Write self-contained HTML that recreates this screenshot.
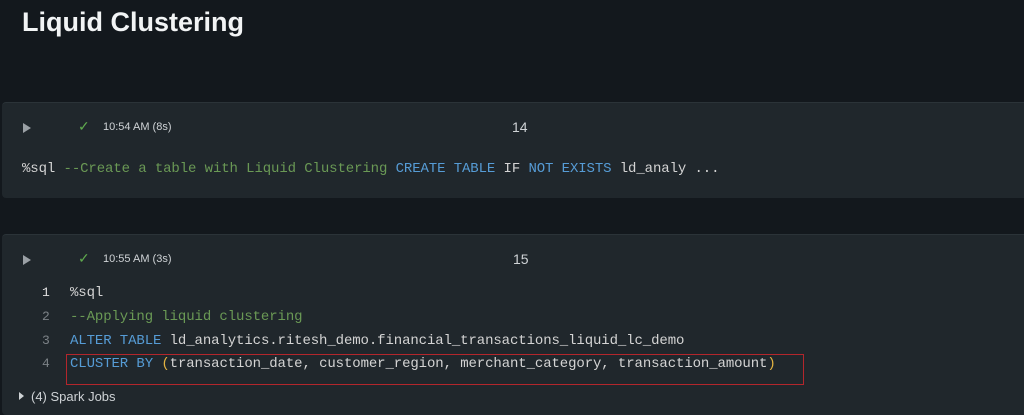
<!DOCTYPE html>
<html><head><style>
body{margin:0;width:1024px;height:405px;background:#13181d;overflow:hidden;position:relative;font-family:"Liberation Sans",sans-serif;}
.t{position:absolute;left:22px;top:7px;font-size:27px;font-weight:bold;color:#f2f4f5;}
.cell{position:absolute;left:2px;right:0;background:#20272c;border-top:1px solid #2b3338;border-radius:4px 0 0 4px;}
.m{font-family:"Liberation Mono",monospace;font-size:14px;letter-spacing:-0.1px;position:absolute;white-space:pre;color:#d4d4d4;}
.s{position:absolute;font-size:11px;color:#cfd3d6;}
.ck{position:absolute;color:#5faa4e;font-size:14px;}
.pl{position:absolute;width:0;height:0;border-left:8px solid #9aa0a5;border-top:5px solid transparent;border-bottom:5px solid transparent;}
.c{color:#6a9955}.k{color:#569cd6}.p{color:#e3b341}
.n{position:absolute;font-family:"Liberation Mono",monospace;font-size:13px;color:#7c8287;}
</style></head><body>
<div class="t">Liquid Clustering</div>
<div class="cell" style="top:102px;height:95px"></div>
<div class="pl" style="left:23px;top:123px"></div>
<div class="ck" style="left:78px;top:118px">✓</div>
<div class="s" style="left:103px;top:121px">10:54 AM (8s)</div>
<div class="s" style="left:512px;top:119px;font-size:14px">14</div>
<div class="m" style="left:22px;top:161px">%sql <span class="c">--Create a table with Liquid Clustering</span> <span class="k">CREATE TABLE</span> IF <span class="k">NOT EXISTS</span> ld_analy ...</div>
<div class="cell" style="top:234px;height:180px"></div>
<div class="pl" style="left:23px;top:255px"></div>
<div class="ck" style="left:78px;top:250px">✓</div>
<div class="s" style="left:103px;top:253px">10:55 AM (3s)</div>
<div class="s" style="left:513px;top:251px;font-size:14px">15</div>
<div class="n" style="left:42px;top:285px;color:#e0e0e0">1</div>
<div class="n" style="left:42px;top:309px">2</div>
<div class="n" style="left:42px;top:333px">3</div>
<div class="n" style="left:42px;top:356px">4</div>
<div class="m" style="left:70px;top:285px">%sql</div>
<div class="m" style="left:70px;top:309px"><span class="c">--Applying liquid clustering</span></div>
<div class="m" style="left:70px;top:333px"><span class="k">ALTER TABLE</span> ld_analytics.ritesh_demo.financial_transactions_liquid_lc_demo</div>
<div class="m" style="left:70px;top:356px"><span class="k">CLUSTER BY</span> <span class="p">(</span>transaction_date, customer_region, merchant_category, transaction_amount<span class="p">)</span></div>
<div style="position:absolute;left:66px;top:354px;width:736px;height:29px;border:1.5px solid #b3262c"></div>
<div style="position:absolute;left:19px;top:392px;width:0;height:0;border-left:5px solid #cfd3d6;border-top:4px solid transparent;border-bottom:4px solid transparent"></div>
<div class="s" style="left:31px;top:389px;font-size:13px">(4) Spark Jobs</div>
</body></html>
